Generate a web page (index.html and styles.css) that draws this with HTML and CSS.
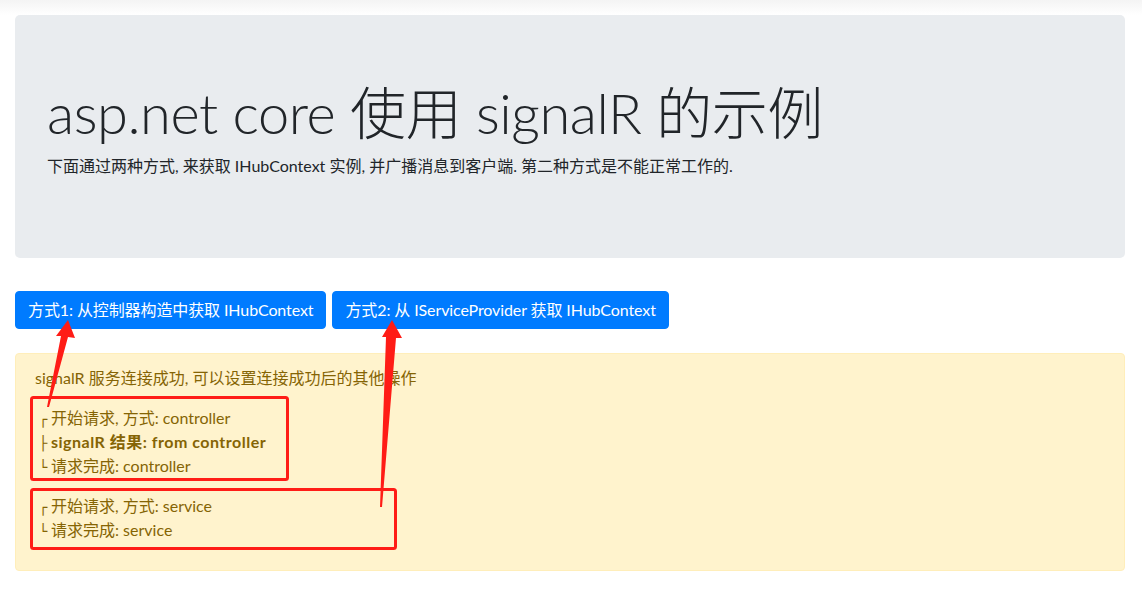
FILE: index.html
```html
<!DOCTYPE html>
<html lang="zh-CN">
<head>
<meta charset="utf-8">
<title>asp.net core 使用 signalR 的示例</title>
<link rel="stylesheet" href="styles.css">
</head>
<body>
<div class="topshade"></div>
<main class="container">
  <section class="jumbotron">
    <h1 class="display">asp.net core 使用 signalR 的示例</h1>
    <p class="lead">下面通过两种方式, 来获取 IHubContext 实例, 并广播消息到客户端. 第二种方式是不能正常工作的.</p>
  </section>
  <div class="actions">
    <button class="btn">方式1: 从控制器构造中获取 IHubContext</button>
    <button class="btn">方式2: 从 IServiceProvider 获取 IHubContext</button>
  </div>
  <div class="alert">
    <p class="msg">signalR 服务连接成功, 可以设置连接成功后的其他操作</p>
    <div class="group">
      <div class="line"><span class="tree">┌</span>开始请求, 方式: controller</div>
      <div class="line strong"><span class="tree">├</span>signalR 结果: from controller</div>
      <div class="line"><span class="tree">└</span>请求完成: controller</div>
    </div>
    <div class="group">
      <div class="line"><span class="tree">┌</span>开始请求, 方式: service</div>
      <div class="line"><span class="tree">└</span>请求完成: service</div>
    </div>
  </div>
</main>
<svg class="annot" width="1142" height="589" viewBox="0 0 1142 589" xmlns="http://www.w3.org/2000/svg">
  <rect x="31.5" y="397.5" width="256" height="82" rx="2" fill="none" stroke="#ff1c16" stroke-width="3"/>
  <rect x="31.5" y="489.5" width="364" height="59" rx="2" fill="none" stroke="#ff1c16" stroke-width="3"/>
  <polygon points="47,407 61,336 56,336 68,320 75,338 68,337 49,407" fill="#ff1c16"/>
  <polygon points="380,507 386,337 382,337 392,320 402,338 396,338 382,507" fill="#ff1c16"/>
</svg>
</body>
</html>
```
FILE: styles.css
```css
html, body {
  margin: 0;
  padding: 0;
}
body {
  width: 1142px;
  height: 589px;
  overflow: hidden;
  background: #fff;
  font-family: "Lato", "Noto Sans CJK SC", sans-serif;
  font-size: 16px;
  line-height: 24px;
  color: #212529;
  position: relative;
}
.topshade {
  height: 15px;
  background: linear-gradient(#f4f4f4, #fff);
}
.container {
  width: 1110px;
  margin: -15px 0 0 15px;
  padding-top: 15px;
}
.jumbotron {
  background: #e9ecef;
  border-radius: 5px;
  padding: 64px 32px;
  margin-bottom: 33px;
}
.display {
  margin: 0 0 8px;
  font-family: "Lato", "Noto Sans CJK SC", sans-serif;
  font-size: 56px;
  font-weight: 300;
  line-height: 67px;
  letter-spacing: -0.45px;
}
.lead {
  margin: 0 0 16px;
}
.actions {
  display: flex;
  gap: 6px;
  margin-bottom: 24px;
}
.btn {
  font: inherit;
  color: #fff;
  background: #007bff;
  border: 1px solid #007bff;
  border-radius: 4px;
  padding: 6px 12px;
  line-height: 24px;
  letter-spacing: -0.1px;
}
.alert {
  background: #fff3cd;
  border: 1px solid #ffeeba;
  border-radius: 4px;
  color: #856404;
  padding: 12px 19px;
}
.msg {
  height: 24px;
  margin: 0 0 16px;
}
.group {
  margin-bottom: 16px;
}
.line {
  height: 24px;
  white-space: nowrap;
}
.strong {
  font-weight: 700;
  letter-spacing: 0.5px;
}
.tree {
  display: inline-block;
  width: 16px;
  text-align: center;
  font-family: "DejaVu Sans", sans-serif;
  font-size: 14px;
  line-height: 14px;
  font-weight: 700;
  letter-spacing: 0;
}
.annot {
  position: absolute;
  left: 0;
  top: 0;
  pointer-events: none;
}
```
